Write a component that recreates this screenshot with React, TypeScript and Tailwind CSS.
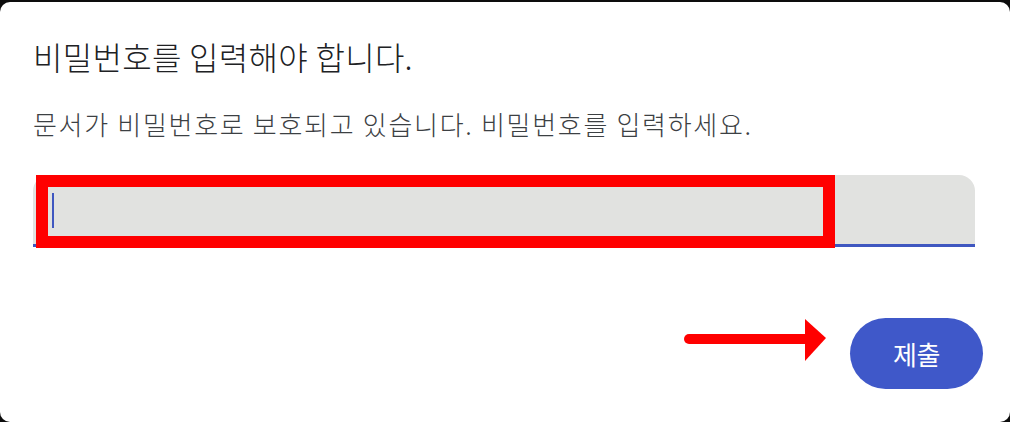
import React from "react";

export default function App() {
  const font = { fontFamily: '"Noto Sans CJK KR", "Noto Sans", sans-serif' };
  return (
    <div className="w-[1010px] h-[422px] bg-[#0d0d0d] pt-[2px] overflow-hidden" style={font}>
      <div className="relative h-[420px] bg-white rounded-[10px] pl-[33px] pr-[35px] pt-[34px]">
        <h1 className="text-[32px] leading-[40px] tracking-[0.3px] text-[#202124] font-light">
          비밀번호를 입력해야 합니다.
        </h1>
        <p className="mt-[32px] text-[26px] leading-[32px] tracking-[1.7px] text-[#3c4043] font-light">
          문서가 비밀번호로 보호되고 있습니다. 비밀번호를 입력하세요.
        </p>
        <div className="relative mt-[35px] h-[72px] bg-[#e1e2e0] rounded-t-[16px] border-b-[3px] border-[#3f57c0]">
          <div className="absolute left-[19px] top-[18px] w-[2px] h-[35px] bg-[#3f57c0]" />
          <div className="absolute left-[3px] top-0 w-[799px] h-[73px] border-[12px] border-[#ff0000]" />
        </div>
        <div className="mt-[71px] flex justify-end">
          <button className="w-[133px] h-[71px] rounded-full bg-[#3f58c9] text-white text-[26px] font-normal tracking-[-0.5px] mr-[-8px]">
            제출
          </button>
        </div>
        <svg
          className="absolute left-[680px] top-[314px]"
          width="150"
          height="48"
          viewBox="0 0 150 48"
        >
          <line x1="9" y1="23" x2="128" y2="23" stroke="#ff0000" strokeWidth="10" strokeLinecap="round" />
          <polygon points="125,3 146,22 125,45" fill="#ff0000" />
        </svg>
      </div>
    </div>
  );
}
